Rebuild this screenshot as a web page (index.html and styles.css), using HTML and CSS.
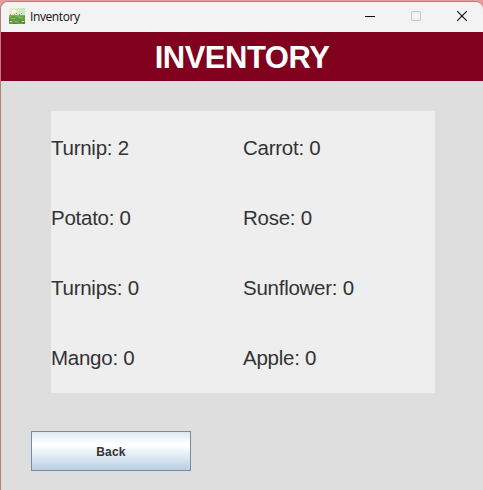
FILE: index.html
```html
<!DOCTYPE html>
<html lang="en">
<head>
<meta charset="utf-8">
<title>Inventory</title>
<link rel="stylesheet" href="styles.css">
</head>
<body>
<main class="window">
  <header class="titlebar">
    <svg class="app-icon" viewBox="0 0 16 16" shape-rendering="crispEdges">
      <defs><linearGradient id="sky" x1="0" x2="1"><stop stop-color="#f0edcb"/><stop offset="1" stop-color="#c9e6bd"/></linearGradient></defs>
      <path fill="url(#sky)" d="M0 0h16v8H0z"/>
      <path fill="#fffdf0" d="M3 2h4v3H3z"/>
      <path fill="#60a044" d="M0 8h16v8H0z"/>
      <path fill="#75b354" d="M0 7h16v1H0zM0 8h3v1H0zM6 8h5v1H6z"/>
      <path fill="#86bd66" d="M2 10h4v1H2zM9 9h5v1H9zM6 13h3v1H6z"/>
      <path fill="#4c8540" d="M0 12h2v1H0zM4 15h4v1H4zM10 13h2v1h-2zM14 14h2v2h-2z"/>
      <path fill="#d98754" d="M1 6h1v1H1zM5 6h1v1H5zM8 7h1v1H8zM12 5h1v1h-1z"/>
      <path fill="#5b9ca6" d="M3 7h1v1H3zM7 5h1v1H7zM10 6h1v1h-1z"/>
      <path fill="#d64e45" d="M2 12h1v1H2zM13 12h2v1h-2z"/>
      <path fill="#f1d0b4" d="M1 13h2v1H1zM13 13h2v1h-2z"/>
    </svg>
    <span class="caption">Inventory</span>
    <div class="controls">
      <svg viewBox="0 0 12 12" shape-rendering="crispEdges"><path d="M1 6.5h10" stroke="#111"/></svg>
      <svg viewBox="0 0 12 12"><rect x="1.5" y="1.5" width="9" height="9" rx=".7" fill="none" stroke="#c2c2c2"/></svg>
      <svg viewBox="0 0 12 12"><path d="M1.2 1.2l9.6 9.6M10.8 1.2l-9.6 9.6" stroke="#111" stroke-width="1.15"/></svg>
    </div>
  </header>
  <h1 class="heading">INVENTORY</h1>
  <section class="content">
    <div class="items">
      <span>Turnip: 2</span><span>Carrot: 0</span>
      <span>Potato: 0</span><span>Rose: 0</span>
      <span>Turnips: 0</span><span>Sunflower: 0</span>
      <span>Mango: 0</span><span>Apple: 0</span>
    </div>
    <button class="back">Back</button>
  </section>
</main>
</body>
</html>
```
FILE: styles.css
```css
* { box-sizing: border-box; }
body {
  margin: 0;
  height: 490px;
  overflow: hidden;
  padding: 1px 0 0;
  background: #e99c9e;
  font-family: "Liberation Sans", Arial, sans-serif;
  color: #333;
}
.window {
  height: 489px;
  overflow: hidden;
  border: solid #b57d7d;
  border-width: 1px 0 0 1px;
  border-radius: 8px 8px 0 0;
  background: #dedede;
}
.titlebar {
  display: flex;
  align-items: center;
  height: 30px;
  padding: 0 15px 0 8px;
  background: #f3f3f3;
}
.app-icon { width: 16px; height: 16px; margin-top: -2px; }
.caption {
  margin-left: 5px;
  font: 12px/16px "Open Sans", sans-serif;
  letter-spacing: -0.4px;
  color: #111;
}
.controls { display: flex; gap: 34px; margin: -2px 0 0 auto; }
.controls svg { display: block; width: 12px; height: 12px; }
.heading {
  height: 49px;
  margin: 0;
  background: #80001e;
  color: #fff;
  font-size: 31px;
  letter-spacing: -0.5px;
  line-height: 51px;
  text-align: center;
}
.content { padding: 30px 48px 19px 50px; }
.items {
  display: grid;
  grid-template-columns: 192px 192px;
  grid-auto-rows: 70px;
  height: 282px;
  padding-top: 1px;
  background: #eee;
  font-size: 20.5px;
  letter-spacing: -0.26px;
  line-height: 72px;
}
.back {
  display: block;
  width: 160px;
  height: 40px;
  margin: 38px 0 0 -20px;
  padding: 1px 0 0;
  border: 1px solid #7a8a99;
  background: linear-gradient(#dde8f3, #fff 30%, #fff 35%, #b8cfe5);
  color: #333;
  font: bold 12px "Liberation Sans", Arial, sans-serif;
  letter-spacing: 0.2px;
}
```
